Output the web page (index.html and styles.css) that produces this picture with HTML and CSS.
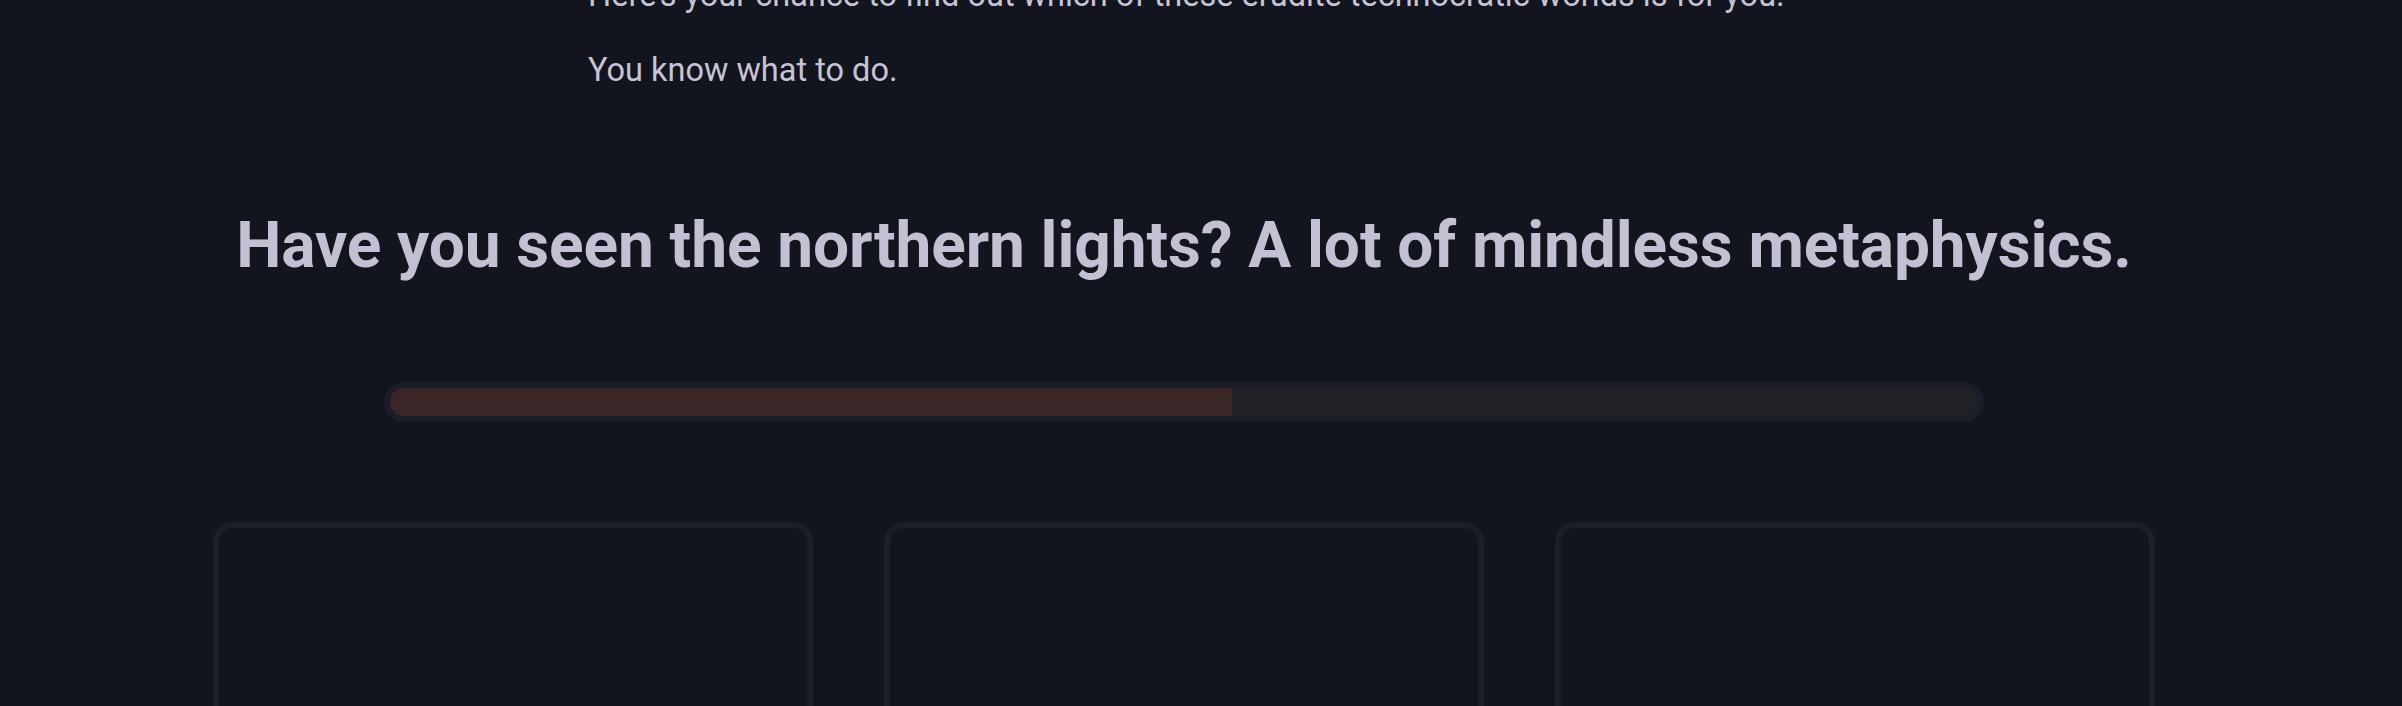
FILE: index.html
```html
<!DOCTYPE html>
<html lang="en">
<head>
<meta charset="utf-8">
<title>Quiz</title>
<link rel="stylesheet" href="styles.css">
</head>
<body>
<main class="page">
  <section class="intro">
    <p>Here’s your chance to find out which of these erudite technocratic worlds is for you.</p>
    <p>You know what to do.</p>
  </section>
  <h1 class="question">Have you seen the northern lights? A lot of mindless metaphysics.</h1>
  <div class="progress">
    <div class="progress-inner">
      <div class="progress-fill" style="width: 53%"></div>
    </div>
  </div>
  <div class="cards">
    <div class="card"></div>
    <div class="card"></div>
    <div class="card"></div>
  </div>
</main>
</body>
</html>
```
FILE: styles.css
```css
html, body {
  margin: 0;
  padding: 0;
  background: #12151d;
}
body {
  font-family: Roboto, "Liberation Sans", Arial, sans-serif;
  color: #c4c2d4;
  overflow: hidden;
}
.page {
  width: 2368px;
  display: flex;
  flex-direction: column;
  align-items: center;
}
.intro {
  width: 1192px;
  margin-top: -29px;
}
.intro p {
  margin: 0 0 27px;
  font-size: 32.5px;
  line-height: 48px;
  white-space: nowrap;
  color: #c6c4d6;
}
.intro p:last-child {
  margin-bottom: 0;
}
.question {
  margin: 113px 0 0;
  font-size: 64px;
  line-height: 77px;
  font-weight: 700;
  letter-spacing: -0.1px;
  text-align: center;
  color: #c2c0d2;
}
.progress {
  margin-top: 98px;
  width: 1600px;
  box-sizing: border-box;
  padding: 6px;
  background: #1b1e28;
  border-radius: 20px;
}
.progress-inner {
  height: 28px;
  background: #202127;
  border-radius: 14px;
  overflow: hidden;
}
.progress-fill {
  height: 100%;
  background: #3b2627;
}
.cards {
  margin-top: 100px;
  display: grid;
  grid-template-columns: repeat(3, 600px);
  column-gap: 71px;
}
.card {
  box-sizing: border-box;
  height: 420px;
  border: 6px solid #1c1f28;
  border-radius: 20px;
  background: #12151d;
}
```
